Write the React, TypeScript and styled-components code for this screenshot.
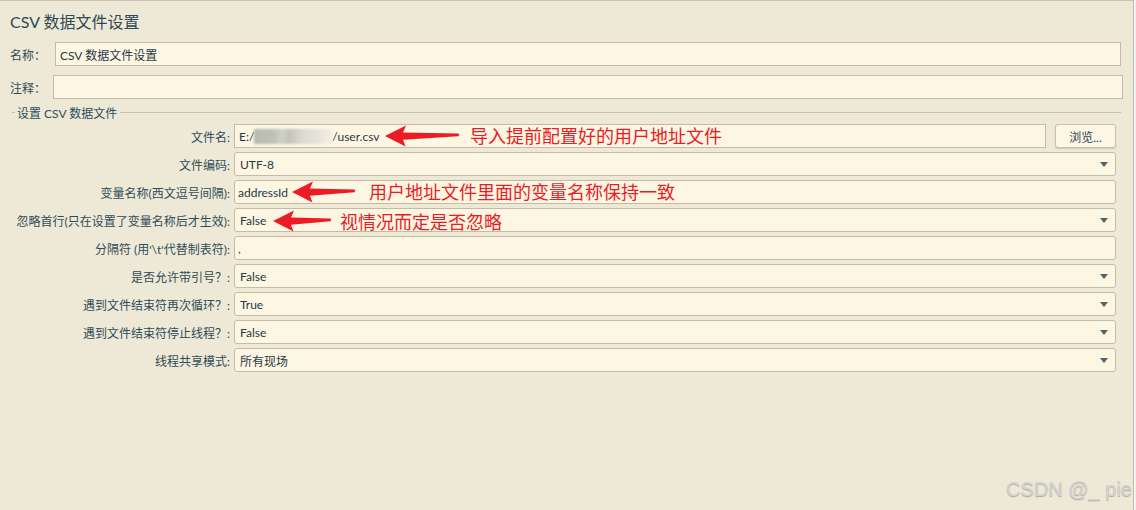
import React from "react";
import styled, { createGlobalStyle } from "styled-components";

const Global = createGlobalStyle`
  html, body { margin: 0; padding: 0; background: #f2f2f0; }
  body { font-family: Lato, "Noto Sans CJK SC", sans-serif; }
  #root { width: 1136px; height: 510px; overflow: hidden; }
`;

const Panel = styled.div`
  position: relative;
  box-sizing: border-box;
  width: 1134px;
  height: 510px;
  background: #eee8d6;
  border-top: 1px solid #cbc4b3;
  border-right: 1px solid #c3bcaa;
  padding: 11px 0 0 10px;
  color: #2f4d58;
`;

const Title = styled.div`
  font-size: 16px;
  line-height: 20px;
  height: 20px;
  color: #2c4a56;
`;

const TopRow = styled.div<{ $mt: number; $mr: number }>`
  display: flex;
  align-items: center;
  height: 24px;
  margin-top: ${(p) => p.$mt}px;
  margin-right: ${(p) => p.$mr}px;
`;

const TopLabel = styled.div<{ $w: number }>`
  width: ${(p) => p.$w}px;
  flex: none;
  font-size: 12px;
  color: #2f4d58;
`;

const Field = styled.div<{ $round?: boolean; $pad?: number }>`
  position: relative;
  flex: 1;
  box-sizing: border-box;
  height: 24px;
  display: flex;
  align-items: center;
  padding: 0 ${(p) => p.$pad ?? 4}px;
  background: #fdf6e3;
  border: 1px solid #c3bba8;
  border-radius: ${(p) => (p.$round ? 3 : 0)}px;
  font-size: 12px;
  color: #1f3b46;
  white-space: nowrap;
`;

const SectionHead = styled.div`
  display: flex;
  align-items: center;
  height: 16px;
  margin-top: 5px;
  margin-right: 12px;
  font-size: 12px;
  color: #2f4d58;
`;

const Rule = styled.div<{ $w?: number }>`
  height: 1px;
  background: #c9c2b0;
  ${(p) => (p.$w ? `width:${p.$w}px; margin-left:2px;` : "flex:1;")}
`;

const Legend = styled.span`
  padding: 0 3px 0 2px;
`;

const Form = styled.div`
  display: grid;
  grid-template-columns: 220px 1fr;
  grid-auto-rows: 24px;
  column-gap: 4px;
  row-gap: 4px;
  margin-top: 4px;
  margin-right: 17px;
`;

const Label = styled.div`
  display: flex;
  align-items: center;
  justify-content: flex-end;
  font-size: 12px;
  color: #2f4d58;
  white-space: nowrap;
`;

const Value = styled.div`
  position: relative;
  display: flex;
  gap: 9px;
`;

const Button = styled.div`
  width: 61px;
  box-sizing: border-box;
  height: 24px;
  display: flex;
  align-items: center;
  justify-content: center;
  background: #fdf6e5;
  border: 1px solid #c9c1ae;
  border-radius: 3px;
  box-shadow: 0 1px 1px rgba(120, 110, 90, 0.25);
  font-size: 12px;
  color: #2b4752;
`;

const Caret = styled.svg`
  position: absolute;
  right: 7px;
  top: 9px;
`;

const Blur = styled.span`
  display: inline-block;
  width: 78px;
  height: 15px;
  background: linear-gradient(
    90deg,
    #b9bbb2 0%,
    #bfc1b8 25%,
    #d0d1c8 35%,
    #c3c4ba 45%,
    #dcdbd1 62%,
    #e8e6db 85%,
    #f3efe1 100%
  );
  filter: blur(1px);
`;

const Annotation = styled.div<{ $left: number; $gap: number; $dy: number }>`
  position: absolute;
  left: ${(p) => p.$left}px;
  top: ${(p) => p.$dy}px;
  height: 24px;
  display: flex;
  align-items: center;
  gap: ${(p) => p.$gap}px;
  pointer-events: none;
`;

const Note = styled.span<{ $dy: number }>`
  font-family: "Noto Sans CJK SC", sans-serif;
  font-size: 18px;
  line-height: 22px;
  color: #ea1c26;
  white-space: nowrap;
  position: relative;
  top: ${(p) => p.$dy}px;
`;

const Watermark = styled.div`
  position: absolute;
  right: 1px;
  bottom: 9px;
  font-family: "Liberation Sans", Arial, sans-serif;
  font-size: 20px;
  line-height: 24px;
  color: #d3d3d3;
  text-shadow: 0 1px 1px rgba(0, 0, 0, 0.28);
  white-space: nowrap;
`;

function Arrow({ len }: { len: number }) {
  const d = `M0 11 L21 0.5 L18 7.5 L${len - 1.5} 8.5 Q${len} 9.8 ${len - 1.5} 11.2 L18 14.8 L20.5 21.5 Z`;
  return (
    <svg width={len} height={22} viewBox={`0 0 ${len} 22`}>
      <path d={d} fill="#ec1c24" />
    </svg>
  );
}

function DropCaret() {
  return (
    <Caret width="8" height="5" viewBox="0 0 8 5">
      <polygon points="0,0 8,0 4,5" fill="#4d6770" />
    </Caret>
  );
}

type Row = {
  label: string;
  value: React.ReactNode;
  combo?: boolean;
  annotation?: { left: number; len: number; gap: number; text: string; dy: number; ty: number };
};

const rows: Row[] = [
  { label: "文件编码:", value: "UTF-8", combo: true },
  {
    label: "变量名称(西文逗号间隔):",
    value: "addressId",
    annotation: { left: 58, len: 64, gap: 13, text: "用户地址文件里面的变量名称保持一致", dy: 0, ty: -1 },
  },
  {
    label: "忽略首行(只在设置了变量名称后才生效):",
    value: "False",
    combo: true,
    annotation: { left: 39, len: 59, gap: 8, text: "视情况而定是否忽略", dy: 1, ty: 0 },
  },
  { label: "分隔符 (用'\\t'代替制表符):", value: "," },
  { label: "是否允许带引号？:", value: "False", combo: true },
  { label: "遇到文件结束符再次循环？:", value: "True", combo: true },
  { label: "遇到文件结束符停止线程？:", value: "False", combo: true },
  { label: "线程共享模式:", value: "所有现场", combo: true },
];

export default function App() {
  return (
    <>
      <Global />
      <Panel>
        <Title>CSV 数据文件设置</Title>
        <TopRow $mt={10} $mr={12}>
          <TopLabel $w={45}>名称：</TopLabel>
          <Field>CSV 数据文件设置</Field>
        </TopRow>
        <TopRow $mt={9} $mr={10}>
          <TopLabel $w={43}>注释：</TopLabel>
          <Field />
        </TopRow>
        <SectionHead>
          <Rule $w={3} />
          <Legend>设置 CSV 数据文件</Legend>
          <Rule />
        </SectionHead>
        <Form>
          <Label>文件名:</Label>
          <Value>
            <Field>
              E:/
              <Blur />
              /user.csv
            </Field>
            <Button>浏览...</Button>
            <Annotation $left={151} $gap={10} $dy={0}>
              <Arrow len={75} />
              <Note $dy={-1}>导入提前配置好的用户地址文件</Note>
            </Annotation>
          </Value>
          {rows.map((r) => (
            <React.Fragment key={r.label}>
              <Label>{r.label}</Label>
              <Value>
                <Field $round $pad={r.combo ? 5 : 3}>
                  {r.value}
                  {r.combo && <DropCaret />}
                </Field>
                {r.annotation && (
                  <Annotation $left={r.annotation.left} $gap={r.annotation.gap} $dy={r.annotation.dy}>
                    <Arrow len={r.annotation.len} />
                    <Note $dy={r.annotation.ty}>{r.annotation.text}</Note>
                  </Annotation>
                )}
              </Value>
            </React.Fragment>
          ))}
        </Form>
        <Watermark>CSDN @_ pie</Watermark>
      </Panel>
    </>
  );
}
